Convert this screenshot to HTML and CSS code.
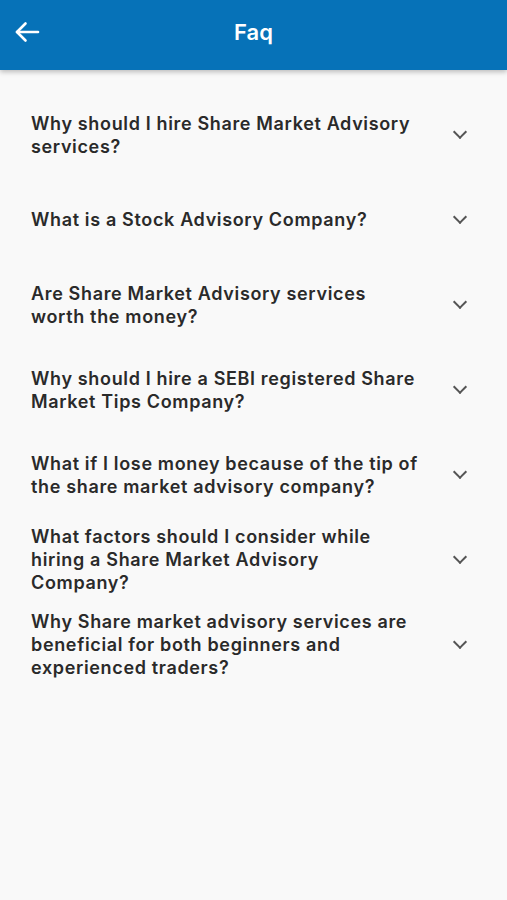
FILE: index.html
```html
<!DOCTYPE html>
<html lang="en">
<head>
  <meta charset="UTF-8">
  <title>Faq</title>
  <link rel="stylesheet" href="styles.css">
</head>
<body>
  <header class="topbar">
    <a class="back" href="#">
      <svg width="26" height="22" viewBox="0 0 26 22" fill="none" stroke="#fff" stroke-width="2.6" stroke-linecap="round" stroke-linejoin="round">
        <path d="M24 11H3"/>
        <path d="M11.5 2.5L3 11l8.5 8.5"/>
      </svg>
    </a>
    <h1>Faq</h1>
  </header>

  <div class="faq-list">
    <div class="faq-item">
      <p class="question">Why should I hire Share Market Advisory services?</p>
      <span class="chevron"></span>
    </div>
    <div class="faq-item">
      <p class="question">What is a Stock Advisory Company?</p>
      <span class="chevron"></span>
    </div>
    <div class="faq-item">
      <p class="question">Are Share Market Advisory services worth the money?</p>
      <span class="chevron"></span>
    </div>
    <div class="faq-item">
      <p class="question">Why should I hire a SEBI registered Share Market Tips Company?</p>
      <span class="chevron"></span>
    </div>
    <div class="faq-item">
      <p class="question">What if I lose money because of the tip of the share market advisory company?</p>
      <span class="chevron"></span>
    </div>
    <div class="faq-item">
      <p class="question">What factors should I consider while hiring a Share Market Advisory Company?</p>
      <span class="chevron"></span>
    </div>
    <div class="faq-item">
      <p class="question">Why Share market advisory services are beneficial for both beginners and experienced traders?</p>
      <span class="chevron"></span>
    </div>
  </div>
</body>
</html>
```

FILE: styles.css
```css
body {
  font-family: Inter, "Noto Sans", sans-serif;
  background: #f9f9f9;
  margin: 0;
  padding: 0;
}
.topbar {
  background: #0672b8;
  height: 70px;
  display: flex;
  align-items: center;
  justify-content: center;
  position: relative;
  box-shadow: 0 2px 5px rgba(0, 0, 0, 0.25);
}
.topbar h1 {
  margin: 0 0 6px;
  color: #fff;
  font-size: 22px;
  font-weight: 600;
}
.back {
  position: absolute;
  left: 14px;
  top: 21px;
  display: flex;
}
.faq-list {
  padding-top: 22px;
}
.faq-item {
  height: 85px;
  display: flex;
  align-items: center;
  padding: 0 38px 0 31px;
}
.question {
  margin: 0;
  width: 389px;
  font-size: 18px;
  line-height: 23px;
  font-weight: 600;
  color: #2a2a2a;
  letter-spacing: 0.65px;
}
.chevron {
  margin-left: auto;
  width: 8px;
  height: 8px;
  border-right: 2px solid #555;
  border-bottom: 2px solid #555;
  transform: rotate(45deg);
  margin-top: -5px;
  margin-right: 4px;
}
```
